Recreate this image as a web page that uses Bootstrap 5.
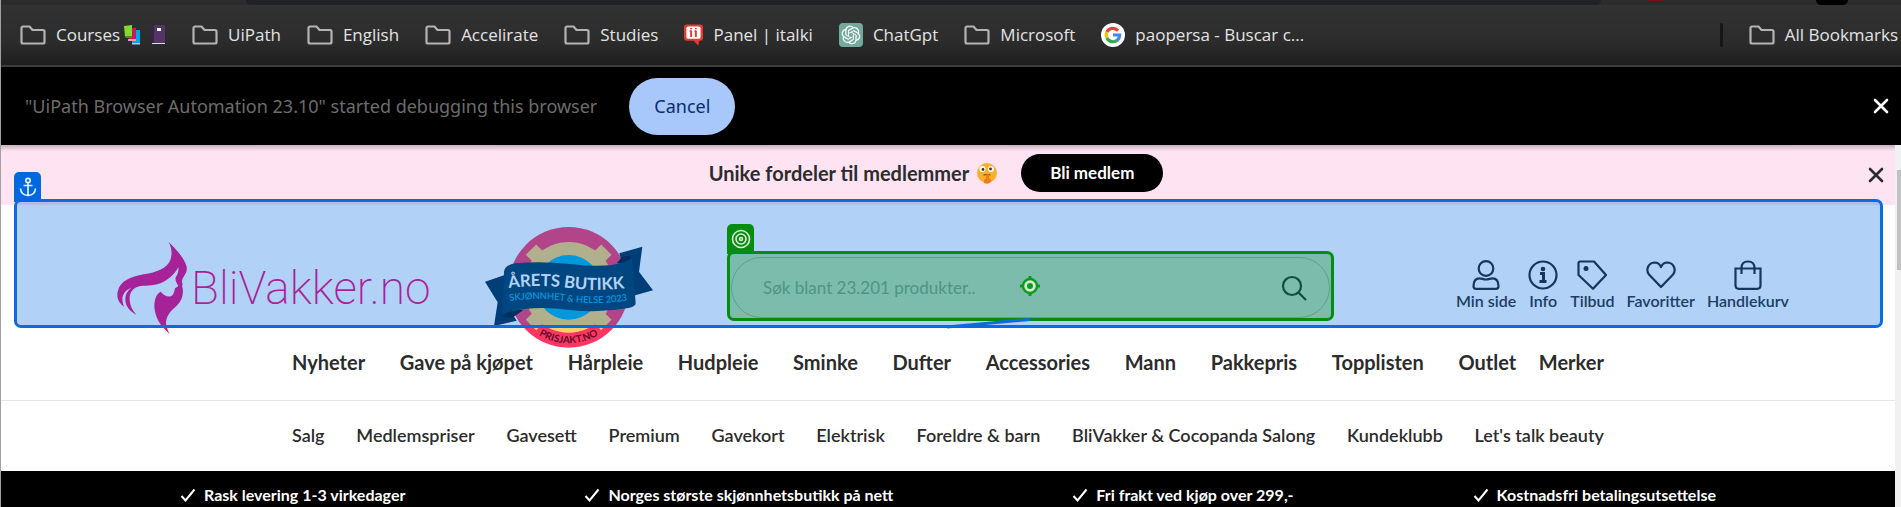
<!DOCTYPE html>
<html lang="no">
<head>
<meta charset="utf-8">
<meta name="viewport" content="width=device-width, initial-scale=1">
<title>BliVakker.no</title>
<link rel="stylesheet" href="https://cdn.jsdelivr.net/npm/bootstrap@5.3.0/dist/css/bootstrap.min.css">
<style>
  body { font-family: Lato, sans-serif; color: #2c2c2c; overflow: hidden; border-left: 1px solid #a0a0a0; }
  a { color: inherit; text-decoration: none; }
  svg { flex: none; display: block; }

  .chrome { font-family: "Open Sans", sans-serif; }
  .tab-strip { height: 5px; background: #2b2b2b; padding-left: 245px; }
  .tab-strip .omnibox { width: 1355px; height: 5px; background: #202124; border-radius: 0 0 12px 12px; }
  .tab-strip .record { width: 14px; height: 1px; background: #7a1010; margin-left: 47px; }
  .tab-strip .avatar { width: 32px; height: 5px; background: #000; border-radius: 0 0 16px 16px; margin-left: 154px; }
  .bookmarks { height: 62px; padding: 0 3px 0 19px; gap: 26px; background: linear-gradient(#323232, #2c2c2c 60%, #1f1f1f); border-bottom: 2px solid #3c3c3c; font-size: 17px; color: #e3e3e3; white-space: nowrap; }
  .bookmarks a { display: flex; align-items: center; gap: 10px; }
  .bookmarks .bar { width: 3px; height: 24px; background: #161616; border-radius: 2px; }
  .infobar { height: 78px; padding: 0 12px 0 24px; gap: 32px; background: #000; color: #6c6c6c; font-family: "Noto Sans", sans-serif; font-size: 18px; white-space: nowrap; }
  .btn-cancel { font-size: 18px; height: 57px; width: 106px; padding: 0; border: 0; border-radius: 29px; background: #a8c7fa; color: #062e6f; }
  .btn-plain { background: none; border: 0; padding: 0; color: inherit; }

  .member { height: 60px; padding-bottom: 4px; background: linear-gradient(#c9b0bf, #fee4f2 6px); }
  .member .offer { font-size: 20px; font-weight: 700; gap: 24px; padding-right: 24px; }
  .member .dismiss { position: absolute; right: 11px; top: 22px; }
  .btn-join { background: #000; color: #fff; border: 0; border-radius: 19px; width: 142px; height: 38px; font-size: 17px; font-weight: 700; padding: 0; }

  .site-head { padding: 22px 106px 0 116px; }
  .brand-name { font-family: Roboto, sans-serif; font-weight: 200; font-size: 46px; line-height: 60px; color: #ee0579; width: 238px; margin-left: 4px; white-space: nowrap; }
  .award { margin: 0 78px 0 56px; }
  .search-form { height: 61px; margin-right: 126px; }
  .search-form .form-control { height: 61px; border-radius: 31px; border: 1px solid #bcc6c6; font-size: 17px; padding: 0 80px 0 31px; }
  .search-form .form-control::placeholder { color: #a1b0b0; opacity: 1; }
  .search-form .go { position: absolute; right: 23px; top: 18px; }
  .shortcuts { gap: 12px; font-size: 16px; line-height: 20px; font-weight: 600; padding-bottom: 4px; }
  .shortcuts a { display: flex; flex-direction: column; align-items: center; gap: 1px; }

  .zone { position: absolute; pointer-events: none; border-radius: 7px; z-index: 2; }
  .zone .flag { position: absolute; width: 27px; height: 30px; display: flex; align-items: center; justify-content: center; border-radius: 5px 5px 0 0; bottom: 100%; left: -3px; }
  .zone-anchor { inset: -6px 12px 20px 13px; border: 3px solid #0b6be3; background: rgba(0, 104, 225, .3); }
  .zone-anchor .flag { background: #0068e1; }
  .zone-target { inset: -6px -4px -3px -4px; z-index: 3; border: 3px solid #078c12; background: rgba(0, 138, 0, .3); }
  .zone-target .flag { background: #078c12; }
  .zone-target .aim { position: absolute; left: 50%; top: 50%; margin: -10px; }
  .zone-target .link-line { position: absolute; right: 50%; top: 100%; }

  .menu { width: 1312px; max-width: 100%; white-space: nowrap; }
  .menu-main { font-size: 20px; line-height: 28px; font-weight: 700; padding-bottom: 24px; }
  .menu-main .last { margin-left: -12px; }
  .menu-sub { font-size: 18px; line-height: 68px; font-weight: 600; padding-bottom: 2px; }
  .rule { border-bottom: 1px solid #e6e6ec; }
  .perks { background: #000; color: #fff; font-size: 16px; line-height: 24px; font-weight: 700; padding-top: 12px; white-space: nowrap; }
  .perks li { display: flex; align-items: center; gap: 8px; }
  .scroll-track { width: 6px; flex: none; background: #f1f1f1; padding: 25px 0 0 2px; }
  .scroll-thumb { height: 100px; background: #c1c1c1; }
</style>
</head>
<body>
<svg width="0" height="0" class="position-absolute" aria-hidden="true">
  <symbol id="folder" viewBox="0 0 26 20"><path d="M3 1.5h6.500l3 3.500h10.500a1.500 1.500 0 0 1 1.500 1.500v10.500a1.500 1.500 0 0 1-1.500 1.500H3A1.500 1.500 0 0 1 1.500 17V3A1.500 1.500 0 0 1 3 1.500z" fill="none" stroke="#b4b4b4" stroke-width="2.200"/></symbol>
  <symbol id="cross" viewBox="0 0 16 16"><path d="M2 2l12 12M14 2L2 14" stroke="currentColor" stroke-width="2.600" stroke-linecap="round"/></symbol>
  <symbol id="tick" viewBox="0 0 16 14"><path d="M1.500 8l4 4.500L14.500 1.500" fill="none" stroke="currentColor" stroke-width="2"/></symbol>
</svg>

<div class="chrome">
  <div class="tab-strip d-flex"><div class="omnibox"></div><div class="record"></div><div class="avatar"></div></div>
  <nav class="bookmarks d-flex align-items-center" aria-label="Bookmarks">
    <a href="#"><svg width="26" height="20"><use href="#folder"/></svg><span class="d-flex align-items-center gap-1">Courses
      <svg width="42" height="20" viewBox="0 0 42 20"><path d="M8 5h8v13l-8 1z" fill="#00a4ef"/><path d="M8 18h8v1.500H8z" fill="#9fd4ea"/><path d="M5 3h7v12H5z" fill="#d4145a"/><path d="M4 14h8v2H4z" fill="#e3a0b8"/><path d="M0 1l8-1v12H1z" fill="#86d72f"/><path d="M1 11h7v2H2z" fill="#4c8f2a"/><path d="M28 0h13v19H28z" fill="#533566"/><path d="M28 0h2v19h-2z" fill="#3a2249"/><path d="M33 3h4v3h-4z" fill="#fff"/><path d="M28 18h13v1H28z" fill="#ddd"/></svg></span></a>
    <a href="#"><svg width="26" height="20"><use href="#folder"/></svg>UiPath</a>
    <a href="#"><svg width="26" height="20"><use href="#folder"/></svg>English</a>
    <a href="#"><svg width="26" height="20"><use href="#folder"/></svg>Accelirate</a>
    <a href="#"><svg width="26" height="20"><use href="#folder"/></svg>Studies</a>
    <a href="#"><svg width="19" height="22" viewBox="0 0 20 22"><path d="M3 0h14q3 0 3 3v11q0 3-3 3h-1l-1 5-5-5H3q-3 0-3-3V3q0-3 3-3z" fill="#e8392f"/><rect x="2.500" y="2" width="15" height="13" rx="2" fill="#fff"/><path d="M7.500 6.500V13M12.500 6.500V13M7.500 3.500v1.500M12.500 3.500v1.500M6 7h2M11 7h2" stroke="#e8392f" stroke-width="2"/></svg>Panel | italki</a>
    <a href="#"><svg width="24" height="24" viewBox="0 0 24 24"><rect width="24" height="24" rx="4" fill="#74aa9c"/><path transform="translate(2.600 2.600) scale(.78)" fill="#fff" d="M22.2819 9.8211a5.9847 5.9847 0 0 0-.5157-4.9108 6.0462 6.0462 0 0 0-6.5098-2.9A6.0651 6.0651 0 0 0 4.9807 4.1818a5.9847 5.9847 0 0 0-3.9977 2.9 6.0462 6.0462 0 0 0 .7427 7.0966 5.98 5.98 0 0 0 .511 4.9107 6.051 6.051 0 0 0 6.5146 2.9001A5.9847 5.9847 0 0 0 13.2599 24a6.0557 6.0557 0 0 0 5.7718-4.2058 5.9894 5.9894 0 0 0 3.9977-2.9001 6.0557 6.0557 0 0 0-.7475-7.0729zm-9.022 12.6081a4.4755 4.4755 0 0 1-2.8764-1.0408l.1419-.0804 4.7783-2.7582a.7948.7948 0 0 0 .3927-.6813v-6.7369l2.02 1.1686a.071.071 0 0 1 .038.052v5.5826a4.504 4.504 0 0 1-4.4945 4.4944zm-9.6607-4.1254a4.4708 4.4708 0 0 1-.5346-3.0137l.142.0852 4.783 2.7582a.7712.7712 0 0 0 .7806 0l5.8428-3.3685v2.3324a.0804.0804 0 0 1-.0332.0615L9.74 19.9502a4.4992 4.4992 0 0 1-6.1408-1.6464zM2.3408 7.8956a4.485 4.485 0 0 1 2.3655-1.9728V11.6a.7664.7664 0 0 0 .3879.6765l5.8144 3.3543-2.0201 1.1685a.0757.0757 0 0 1-.071 0l-4.8303-2.7865A4.504 4.504 0 0 1 2.3408 7.872zm16.5963 3.8558L13.1038 8.364 15.1192 7.2a.0757.0757 0 0 1 .071 0l4.8303 2.7913a4.4944 4.4944 0 0 1-.6765 8.1042v-5.6772a.79.79 0 0 0-.407-.667zm2.0107-3.0231l-.142-.0852-4.7735-2.7818a.7759.7759 0 0 0-.7854 0L9.409 9.2297V6.8974a.0662.0662 0 0 1 .0284-.0615l4.8303-2.7866a4.4992 4.4992 0 0 1 6.6802 4.66zM8.3065 12.863l-2.02-1.1638a.0804.0804 0 0 1-.038-.0567V6.0742a4.4992 4.4992 0 0 1 7.3757-3.4537l-.142.0805L8.704 5.459a.7948.7948 0 0 0-.3927.6813zm1.0976-2.3654l2.602-1.4998 2.6069 1.4998v2.9994l-2.5974 1.4997-2.6067-1.4997Z"/></svg>ChatGpt</a>
    <a href="#"><svg width="26" height="20"><use href="#folder"/></svg>Microsoft</a>
    <a href="#"><svg width="24" height="24" viewBox="0 0 24 24"><circle cx="12" cy="12" r="12" fill="#fff"/><g fill="none" stroke-width="3.200"><path d="M17 7.600A6.800 6.800 0 0 0 5.900 9" stroke="#ea4335"/><path d="M5.900 9a6.800 6.800 0 0 0 0 6" stroke="#fbbc05"/><path d="M5.900 15a6.800 6.800 0 0 0 10.600 2" stroke="#34a853"/><path d="M16.300 17.200A6.800 6.800 0 0 0 18.700 12H12" stroke="#4285f4"/></g></svg>paopersa - Buscar c...</a>
    <span class="bar ms-auto"></span>
    <a href="#"><svg width="26" height="20"><use href="#folder"/></svg>All Bookmarks</a>
  </nav>
  <div class="infobar d-flex align-items-center">
    <span>"UiPath Browser Automation 23.10" started debugging this browser</span>
    <button type="button" class="btn btn-cancel">Cancel</button>
    <button type="button" class="btn-plain text-white ms-auto" aria-label="Close"><svg width="16" height="16"><use href="#cross"/></svg></button>
  </div>
</div>

<div class="d-flex">
  <div class="flex-grow-1">
    <div class="member position-relative d-flex align-items-center justify-content-center">
      <div class="offer d-flex align-items-center">
        <span class="d-flex align-items-center gap-2">Unike fordeler til medlemmer
          <svg width="20" height="21" viewBox="0 0 20 21"><circle cx="10" cy="10" r="10" fill="#fbb02d"/><circle cx="5.500" cy="6" r="3" fill="#fff"/><circle cx="14" cy="6" r="3" fill="#fff"/><circle cx="6" cy="6.500" r="1.400" fill="#4a2b12"/><circle cx="13.500" cy="6" r="1.400" fill="#4a2b12"/><path d="M6.500 12q3.500-1 7 0" stroke="#6b3d12" stroke-width="1.200" fill="none"/><path d="M9 12q2-2 3 0v3q3 1 2 4-3 3-7 1-1-3 2-5z" fill="#f47b20"/></svg></span>
        <button type="button" class="btn-join">Bli medlem</button>
      </div>
      <button type="button" class="btn-plain dismiss" aria-label="Lukk"><svg width="16" height="16"><use href="#cross"/></svg></button>
    </div>

    <header class="site-head position-relative d-flex align-items-center">
      <a href="#" class="d-flex align-items-center">
        <svg width="70" height="92" viewBox="350 246 210 276"><path fill="#ee0579" d="M505 246C530 270 552 295 559 320C561 335 556 340 550 350C545 358 543 366 547 372C545 378 545 380 547 384C549 400 547 415 537 428C520 448 497 460 497 490C498 502 502 510 508 522C485 500 465 480 462 440C462 415 470 400 481 395C490 405 500 412 512 409C520 405 522 395 524 385C530 380 533 380 534 377C528 370 524 360 526 352C533 342 535 332 534 322C528 335 515 350 495 362C465 380 440 375 420 378C400 382 388 395 388 415C388 435 395 450 408 464C390 455 376 440 375 420C375 405 380 392 394 383C378 388 368 400 366 415C366 425 368 432 371 440C355 430 348 412 352 395C360 360 395 350 430 343C470 337 500 325 510 300C516 283 515 265 505 246Z"/></svg>
        <span class="brand-name">BliVakker.no</span>
      </a>
      <svg class="award" width="168" height="121" viewBox="75 51 504 363" role="img" aria-label="Årets butikk">
        <circle cx="326" cy="232" r="181" fill="#ff3664"/>
        <g fill="#ffd068"><circle cx="326" cy="232" r="136"/><rect x="304" y="72" width="44" height="320" transform="rotate(45 326 232)"/><rect x="304" y="72" width="44" height="320" transform="rotate(-45 326 232)"/></g>
        <circle cx="326" cy="232" r="97" fill="#00aedc"/>
        <path d="M75 215L150 190V300L170 332L102 348L113 277ZM478 130L547 110L537 185L579 241L515 259Z" fill="#002d49"/>
        <path d="M127 318Q128 300 150 298L190 300L160 321Q135 326 127 318ZM470 160L487 140Q515 135 516 145L515 160Z" fill="#00182d"/>
        <path d="M132 185Q134 165 165 160Q240 152 330 162Q430 174 480 160Q512 152 516 142L527 280Q527 290 505 294Q420 310 330 300Q230 287 160 303Q132 309 127 318Z" fill="#003857"/>
        <path id="rib1" d="M146 234Q235 222 325 234T515 232" fill="none"/><path id="rib2" d="M149 273Q235 261 325 274T522 268" fill="none"/><path id="rim" d="M176 312A172 172 0 0 0 476 312" fill="none"/>
        <g font-family="Lato, sans-serif" font-weight="700"><text font-size="50" fill="#fff"><textPath href="#rib1">ÅRETS BUTIKK</textPath></text><text font-size="28" fill="#00aedc" font-weight="600"><textPath href="#rib2">SKJØNNHET &amp; HELSE 2023</textPath></text><text font-size="30" fill="#5c0c28" text-anchor="middle"><textPath href="#rim" startOffset="50%">PRISJAKT.NO</textPath></text></g>
      </svg>
      <form class="search-form position-relative flex-grow-1" role="search" onsubmit="return false">
        <input type="search" class="form-control" placeholder="Søk blant 23.201 produkter.." aria-label="Søk">
        <button type="submit" class="btn-plain go" aria-label="Søk"><svg width="26" height="26" viewBox="0 0 26 26" fill="none" stroke="#222" stroke-width="2.200"><circle cx="11" cy="11" r="9"/><path d="M17.500 17.500L25 25"/></svg></button>
        <div class="zone zone-target">
          <span class="flag"><svg width="20" height="20" viewBox="0 0 20 20" fill="none" stroke="#d5f0d5" stroke-width="1.600"><circle cx="10" cy="10" r="8.500"/><circle cx="10" cy="10" r="5"/><circle cx="10" cy="10" r="1.500"/></svg></span>
          <svg class="aim" width="20" height="20" viewBox="0 0 20 20"><path d="M10 0v20M0 10h20" stroke="#119a1c" stroke-width="3"/><circle cx="10" cy="10" r="7" fill="#d2ecd8" stroke="#119a1c" stroke-width="2.500"/><circle cx="10" cy="10" r="3" fill="#119a1c"/></svg>
          <svg class="link-line" width="83" height="11" viewBox="0 0 83 11"><path d="M0 9L83 1.500" stroke="#0b6be3" stroke-width="3"/></svg>
        </div>
      </form>
      <nav class="shortcuts d-flex" aria-label="Snarveier">
        <a href="#"><svg width="30" height="30" viewBox="0 0 30 30" fill="none" stroke="#222" stroke-width="2.200"><circle cx="15" cy="8.500" r="7.300"/><path d="M5 28.800q-2.500 0-2.500-2.500 0-8 6-8c3 0 3 1.200 6.500 1.200s3.500-1.200 6.500-1.200q6 0 6 8 0 2.500-2.500 2.500z"/></svg>Min side</a>
        <a href="#"><svg width="30" height="30" viewBox="0 0 30 30" fill="none" stroke="#222" stroke-width="2.200"><circle cx="15" cy="15" r="13.500"/><circle cx="15" cy="9" r="2.300" fill="#222" stroke="none"/><path d="M12 13.500h3.500V21M11.500 21.500h7" stroke-width="3"/></svg>Info</a>
        <a href="#"><svg width="30" height="30" viewBox="0 0 30 30" fill="none" stroke="#222" stroke-width="2.200" stroke-linejoin="round"><path d="M1.500 3q0-1.500 1.500-1.500h14L29 15 16 28.800 1.500 15z"/><circle cx="9" cy="8.500" r="2.500" fill="#222" stroke="none"/></svg>Tilbud</a>
        <a href="#"><svg width="30" height="30" viewBox="0 0 30 30" fill="none" stroke="#222" stroke-width="2.200" stroke-linejoin="round"><path d="M15 27L3 14.500C-.5 10 2 3 8.500 2.500 12 2.500 14 4.500 15 7c1-2.500 3-4.500 6.500-4.500C28 3 30.500 10 27 14.500z"/></svg>Favoritter</a>
        <a href="#"><svg width="30" height="30" viewBox="0 0 30 30" fill="none" stroke="#222" stroke-width="2.200"><path d="M2.500 8.500h25v17q0 3.300-3.300 3.300H5.800q-3.300 0-3.300-3.300zM8.500 14V8q0-6.500 6.500-6.500T21.500 8v6"/></svg>Handlekurv</a>
      </nav>
      <div class="zone zone-anchor"><span class="flag"><svg width="18" height="20" viewBox="0 0 18 20" fill="none" stroke="#e4efff" stroke-width="1.700"><circle cx="9" cy="3.500" r="2.200"/><path d="M9 6v12M4.500 8.500h9M1.500 11.500q.5 6.500 7.500 7 7-.5 7.500-7"/></svg></span></div>
    </header>

    <div class="rule">
      <nav class="menu menu-main mx-auto d-flex justify-content-between" aria-label="Kategorier">
        <a href="#">Nyheter</a><a href="#">Gave på kjøpet</a><a href="#">Hårpleie</a><a href="#">Hudpleie</a><a href="#">Sminke</a><a href="#">Dufter</a><a href="#">Accessories</a><a href="#">Mann</a><a href="#">Pakkepris</a><a href="#">Topplisten</a><a href="#">Outlet</a><a href="#" class="last">Merker</a>
      </nav>
    </div>
    <nav class="menu menu-sub mx-auto d-flex justify-content-between" aria-label="Utvalg">
      <a href="#">Salg</a><a href="#">Medlemspriser</a><a href="#">Gavesett</a><a href="#">Premium</a><a href="#">Gavekort</a><a href="#">Elektrisk</a><a href="#">Foreldre &amp; barn</a><a href="#">BliVakker &amp; Cocopanda Salong</a><a href="#">Kundeklubb</a><a href="#">Let's talk beauty</a>
    </nav>
    <ul class="perks list-unstyled mb-0 d-flex justify-content-evenly">
      <li><svg width="16" height="14"><use href="#tick"/></svg>Rask levering 1-3 virkedager</li>
      <li><svg width="16" height="14"><use href="#tick"/></svg>Norges største skjønnhetsbutikk på nett</li>
      <li><svg width="16" height="14"><use href="#tick"/></svg>Fri frakt ved kjøp over 299,-</li>
      <li><svg width="16" height="14"><use href="#tick"/></svg>Kostnadsfri betalingsutsettelse</li>
    </ul>
  </div>
  <div class="scroll-track"><div class="scroll-thumb"></div></div>
</div>
<script src="https://cdn.jsdelivr.net/npm/bootstrap@5.3.0/dist/js/bootstrap.bundle.min.js"></script>
</body>
</html>
